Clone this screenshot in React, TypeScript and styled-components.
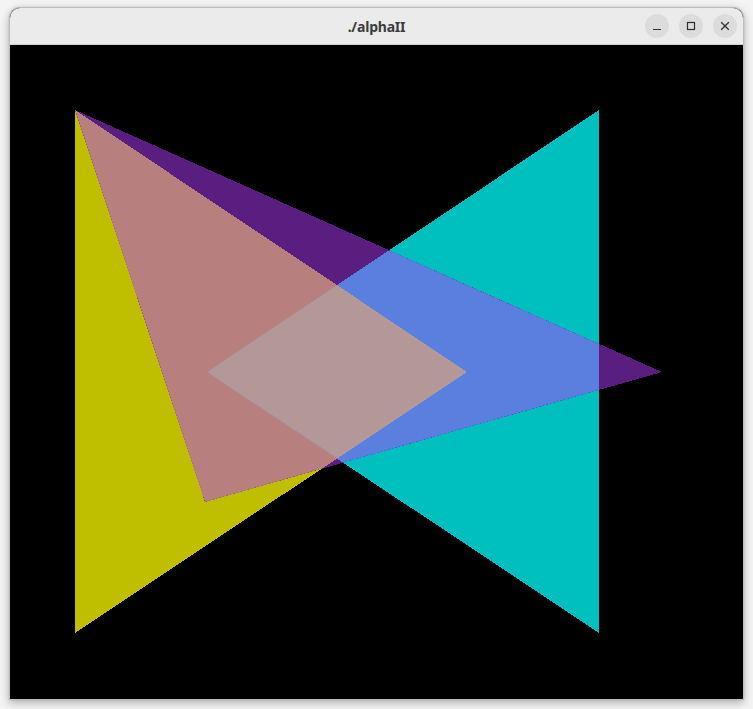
import React from "react";
import styled, { createGlobalStyle } from "styled-components";

const Global = createGlobalStyle`
  html, body { margin: 0; padding: 0; background: #f4f4f4; }
  body { font-family: "Noto Sans", "DejaVu Sans", sans-serif; }
`;

const Page = styled.div`
  width: 753px;
  height: 709px;
  padding: 7px 0 0 9px;
  box-sizing: border-box;
  overflow: hidden;
`;

const Window = styled.div`
  width: 735px;
  box-sizing: border-box;
  border: 1px solid #bdbdbd;
  border-radius: 11px 11px 0 0;
  overflow: hidden;
  box-shadow: 0 3px 10px rgba(0, 0, 0, 0.28), 0 0 2px rgba(0, 0, 0, 0.15);
  background: #000;
  display: flex;
  flex-direction: column;
`;

const TitleBar = styled.div`
  height: 37px;
  box-sizing: border-box;
  background: #ebebeb;
  border-bottom: 1px solid #cfcfcf;
  display: grid;
  grid-template-columns: 1fr auto 1fr;
  align-items: center;
`;

const Title = styled.div`
  grid-column: 2;
  font-family: "Noto Sans", "DejaVu Sans", sans-serif;
  font-weight: 700;
  font-size: 14px;
  color: #3c3c3c;
  letter-spacing: -0.2px;
  padding-top: 1px;
`;

const Controls = styled.div`
  grid-column: 3;
  justify-self: end;
  display: flex;
  gap: 10px;
  padding-right: 6px;
`;

const CtlButton = styled.div`
  width: 24px;
  height: 24px;
  border-radius: 50%;
  background: #dcdcdc;
  display: flex;
  align-items: center;
  justify-content: center;
  color: #2e2e2e;
`;

const Canvas = styled.div`
  height: 654px;
  background: #000;
`;

const Scene = styled.svg`
  display: block;
  width: 733px;
  height: 654px;
`;

const Y = "75,110 75,633 467,372";
const C = "599,110 599,633 207,372";
const P = "75,110 662,372 205,502";

export default function App() {
  return (
    <>
      <Global />
      <Page>
        <Window>
          <TitleBar>
            <Title>./alphaII</Title>
            <Controls>
              <CtlButton>
                <svg width="10" height="10" viewBox="0 0 10 10">
                  <line x1="1" y1="8.5" x2="9" y2="8.5" stroke="currentColor" strokeWidth="1.2" />
                </svg>
              </CtlButton>
              <CtlButton>
                <svg width="10" height="10" viewBox="0 0 10 10">
                  <rect x="1.5" y="1.5" width="7" height="7" fill="none" stroke="currentColor" strokeWidth="1.2" />
                </svg>
              </CtlButton>
              <CtlButton>
                <svg width="10" height="10" viewBox="0 0 10 10">
                  <path d="M1.2 1.2 L8.8 8.8 M8.8 1.2 L1.2 8.8" stroke="currentColor" strokeWidth="1.3" />
                </svg>
              </CtlButton>
            </Controls>
          </TitleBar>
          <Canvas>
            <Scene viewBox="10 45 733 654" shapeRendering="crispEdges">
              <defs>
                <clipPath id="clipP">
                  <polygon points={P} />
                </clipPath>
                <clipPath id="clipC">
                  <polygon points={C} />
                </clipPath>
              </defs>
              <polygon points={Y} fill="#bfbf00" />
              <polygon points={C} fill="#00bfbf" />
              <polygon points={P} fill="#5a1e80" />
              <polygon points={Y} fill="#b87f7f" clipPath="url(#clipP)" />
              <polygon points={C} fill="#5a7fdf" clipPath="url(#clipP)" />
              <g clipPath="url(#clipP)">
                <polygon points={Y} fill="#b49898" clipPath="url(#clipC)" />
              </g>
            </Scene>
          </Canvas>
        </Window>
      </Page>
    </>
  );
}
